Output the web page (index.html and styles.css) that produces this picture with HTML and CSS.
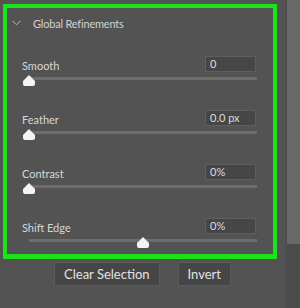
FILE: index.html
```html
<!DOCTYPE html>
<html lang="en">
<head>
  <meta charset="UTF-8">
  <meta name="viewport" content="width=device-width, initial-scale=1.0">
  <title>Global Refinements</title>
  <link rel="stylesheet" href="styles.css">
</head>
<body>
  <div class="window">
    <div class="content">
      <section class="panel">
        <div class="panel-head">
          <svg class="chevron" width="9" height="6" viewBox="0 0 9 6">
            <path d="M0.5 0.8 L4.5 4.8 L8.5 0.8" fill="none" stroke="#bdbdbd" stroke-width="1"/>
          </svg>
          <span>Global Refinements</span>
        </div>

        <div class="fields">
          <div class="field">
            <div class="field-top">
              <label>Smooth</label>
              <div class="value">0</div>
            </div>
            <div class="track">
              <span class="thumb" style="left: 0%"></span>
            </div>
          </div>

          <div class="field">
            <div class="field-top">
              <label>Feather</label>
              <div class="value">0.0 px</div>
            </div>
            <div class="track">
              <span class="thumb" style="left: 0%"></span>
            </div>
          </div>

          <div class="field">
            <div class="field-top">
              <label>Contrast</label>
              <div class="value">0%</div>
            </div>
            <div class="track">
              <span class="thumb" style="left: 0%"></span>
            </div>
          </div>

          <div class="field">
            <div class="field-top">
              <label>Shift Edge</label>
              <div class="value">0%</div>
            </div>
            <div class="track">
              <span class="thumb" style="left: 50%"></span>
            </div>
          </div>
        </div>
      </section>

      <div class="actions">
        <button>Clear Selection</button>
        <button>Invert</button>
      </div>
    </div>

    <div class="scrollbar">
      <div class="scroll-thumb"></div>
    </div>
  </div>
</body>
</html>
```

FILE: styles.css
```css
html, body {
  margin: 0;
  padding: 0;
  height: 100%;
  overflow: hidden;
}
body {
  background-color: #535353;
  color: #d6d6d6;
  font-family: 'Lato', 'Noto Sans', sans-serif;
  font-size: 11px;
}
.window {
  display: flex;
  height: 308px;
}
.content {
  width: 286px;
}
.panel {
  margin: 4px 0 0 3px;
  width: 266px;
  border: 4px solid #1ae31a;
  border-bottom-width: 5px;
}
.panel-head {
  display: flex;
  align-items: center;
  height: 30px;
  color: #d2d2d2;
  letter-spacing: -0.2px;
}
.chevron {
  margin-left: 5px;
  margin-right: 12px;
}
.fields {
  display: flex;
  flex-direction: column;
  gap: 20px;
  padding-top: 8px;
  padding-bottom: 12px;
}
.field {
  padding-top: 10px;
}
.field-top {
  display: flex;
  justify-content: space-between;
  align-items: flex-end;
  padding-left: 15px;
  padding-right: 17px;
  height: 16px;
}
.field-top label {
  line-height: 14px;
  position: relative;
  top: 1px;
}
.value {
  box-sizing: border-box;
  width: 51px;
  height: 16px;
  line-height: 14px;
  padding-left: 4px;
  background-color: #464646;
  border: 1px solid #5f5f5f;
  color: #dcdcdc;
}
.track {
  position: relative;
  height: 3px;
  margin: 5px 16px 0 22px;
  background-color: #6d6d6d;
}
.thumb {
  position: absolute;
  top: -2px;
  width: 12px;
  height: 11px;
  margin-left: -6px;
  background-color: #f4f4f4;
  border-radius: 5px 5px 2px 2px;
  clip-path: polygon(50% 0, 100% 55%, 100% 100%, 0 100%, 0 55%);
}
.actions {
  display: flex;
  justify-content: center;
  gap: 18px;
  margin-top: 3px;
}
.actions button {
  height: 24px;
  padding: 0 9px;
  background-color: #464646;
  border: 1px solid #5b5b5b;
  border-radius: 1px;
  color: #e2e2e2;
  font-family: 'Lato', 'Noto Sans', sans-serif;
  font-size: 13px;
}
.scrollbar {
  width: 14px;
  background-color: #4b4b4b;
  border-left: 1px solid #4f4f4f;
}
.scroll-thumb {
  height: 244px;
  margin-left: 1px;
  background-color: #696969;
}
```
